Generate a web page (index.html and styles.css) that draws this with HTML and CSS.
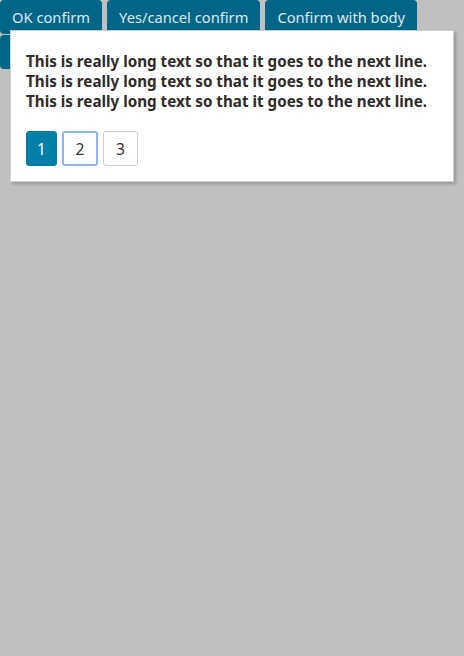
FILE: index.html
```html
<!DOCTYPE html>
<html>
<head>
<meta charset="utf-8">
<link rel="stylesheet" href="styles.css">
</head>
<body>
<div class="toolbar">
  <button class="btn">OK confirm</button>
  <button class="btn">Yes/cancel confirm</button>
  <button class="btn">Confirm with body</button>
  <button class="btn btn-wide" aria-label="More"></button>
</div>
<div class="dialog">
  <div class="dialog-body">
    <p class="msg">This is really long text so that it goes to the next line.</p>
    <p class="msg">This is really long text so that it goes to the next line.</p>
    <p class="msg">This is really long text so that it goes to the next line.</p>
  </div>
  <div class="pager">
    <button class="page active">1</button>
    <button class="page focus">2</button>
    <button class="page">3</button>
  </div>
</div>
</body>
</html>
```
FILE: styles.css
```css
html, body {
  margin: 0;
  padding: 0;
  background: #c0c0c0;
  height: 100%;
  font-family: "Noto Sans", "Open Sans", sans-serif;
}
.toolbar {
  display: flex;
  flex-wrap: wrap;
  column-gap: 5px;
  row-gap: 0;
  width: 464px;
}
.btn {
  height: 34px;
  margin: 0 0 1px 0;
  padding: 0 12px;
  border: none;
  border-radius: 4px;
  background: #006687;
  color: #dfe8ec;
  font-family: "Noto Sans", "Open Sans", sans-serif;
  font-size: 14.7px;
  line-height: 34px;
  cursor: pointer;
}
.btn-wide {
  width: 150px;
}
.dialog {
  position: absolute;
  left: 10px;
  top: 30px;
  width: 444px;
  height: 152px;
  box-sizing: border-box;
  background: #fff;
  border: 1px solid #d0d0d0;
  box-shadow: 2px 2px 3px rgba(0, 0, 0, 0.22);
  padding: 20px 15px 15px 15px;
}
.msg {
  margin: 0;
  font-size: 15.2px;
  line-height: 20px;
  font-weight: bold;
  color: #2f2b2a;
  white-space: nowrap;
}
.pager {
  display: flex;
  gap: 5px;
  margin-top: 20px;
}
.page {
  box-sizing: border-box;
  height: 35px;
  width: 35px;
  padding: 0;
  border: 1px solid #cfcfcf;
  border-radius: 3px;
  background: #fff;
  color: #333;
  font-family: "Noto Sans", "Open Sans", sans-serif;
  font-size: 15.5px;
}
.page.active {
  width: 31px;
  background: #0080a8;
  border-color: #0080a8;
  color: #fff;
}
.page.focus {
  width: 36px;
  border: 2px solid #8fb4f5;
}
```
